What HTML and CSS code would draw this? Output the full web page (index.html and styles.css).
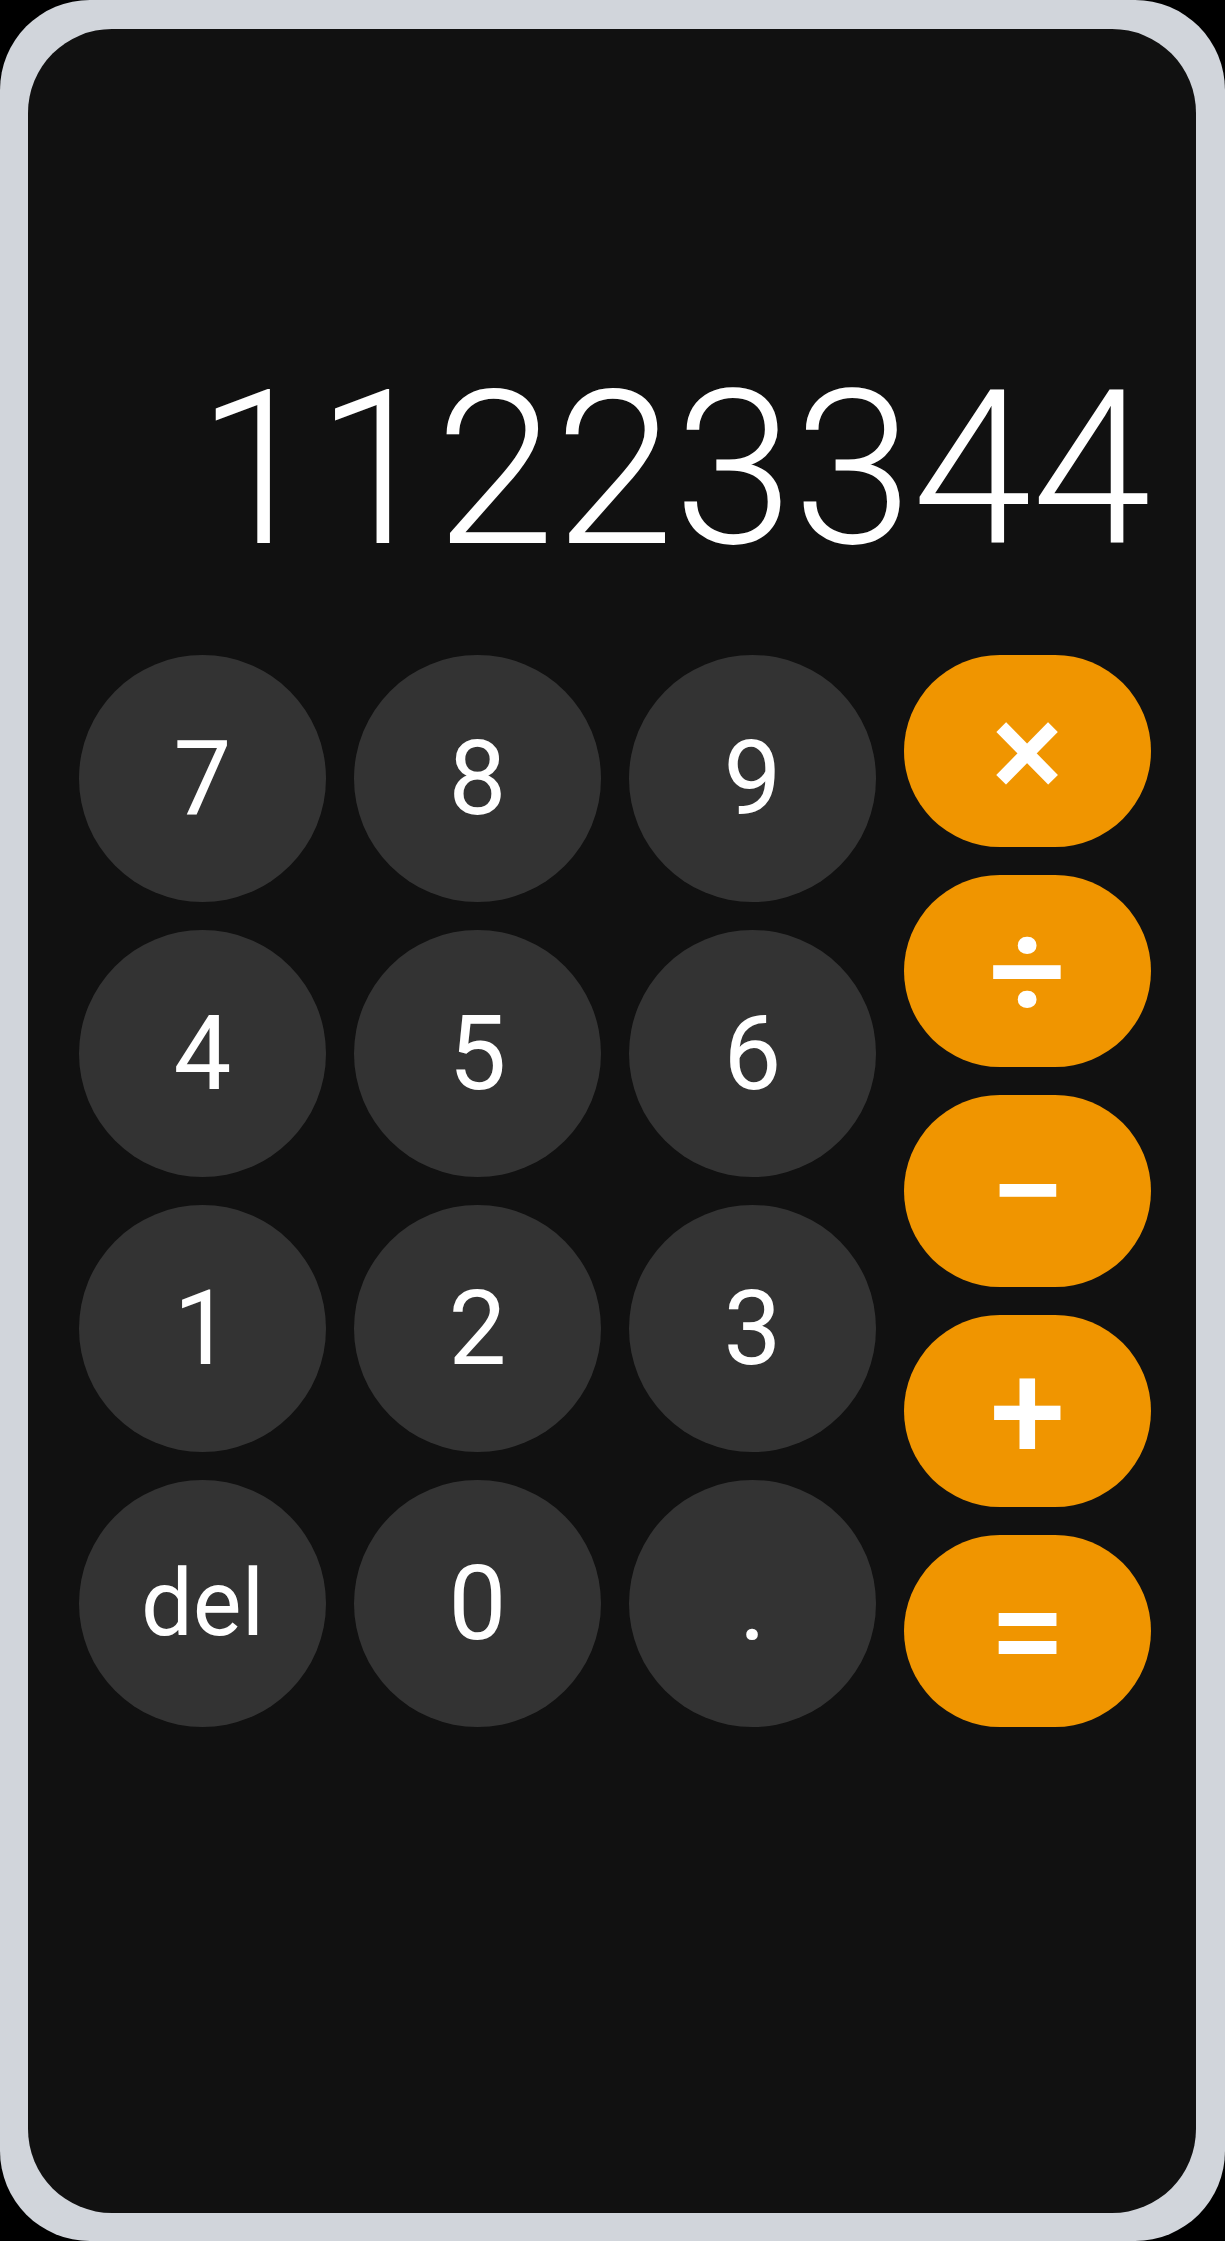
FILE: index.html
```html
<!DOCTYPE html>
<html lang="en">
<head>
<meta charset="utf-8">
<title>Calculator</title>
<link rel="stylesheet" href="styles.css">
</head>
<body>
<div class="frame">
  <div class="calc">
    <div class="display">11223344</div>
    <div class="keypad">
      <div class="digits">
        <button class="key">7</button>
        <button class="key">8</button>
        <button class="key">9</button>
        <button class="key">4</button>
        <button class="key">5</button>
        <button class="key">6</button>
        <button class="key">1</button>
        <button class="key">2</button>
        <button class="key">3</button>
        <button class="key key-del">del</button>
        <button class="key">0</button>
        <button class="key">.</button>
      </div>
      <div class="ops">
        <button class="op">×</button>
        <button class="op">÷</button>
        <button class="op">−</button>
        <button class="op">+</button>
        <button class="op">=</button>
      </div>
    </div>
  </div>
</div>
</body>
</html>
```
FILE: styles.css
```css
html, body {
  margin: 0;
  padding: 0;
  background: #000;
}

body {
  width: 1225px;
  height: 2241px;
  font-family: Roboto, "Noto Sans", sans-serif;
}

.frame {
  width: 1225px;
  height: 2241px;
  box-sizing: border-box;
  background: #d1d5db;
  border-radius: 90px;
  padding: 29px 29px 28px 28px;
}

.calc {
  height: 100%;
  box-sizing: border-box;
  background: #111111;
  border-radius: 84px;
  padding: 333px 45px 0 51px;
}

.display {
  font-family: Roboto, sans-serif;
  font-weight: 300;
  font-size: 215px;
  line-height: 215px;
  height: 215px;
  color: #ffffff;
  text-align: right;
  white-space: nowrap;
  margin-bottom: 78px;
}

.keypad {
  display: flex;
  gap: 28px;
}

.digits {
  display: grid;
  grid-template-columns: repeat(3, 247px);
  grid-auto-rows: 247px;
  gap: 28px;
}

.ops {
  display: flex;
  flex-direction: column;
  gap: 28px;
  width: 247px;
}

.key,
.op {
  border: none;
  margin: 0;
  padding: 0;
  color: #ffffff;
  display: flex;
  align-items: center;
  justify-content: center;
  font-family: Roboto, sans-serif;
  line-height: normal;
}

.key {
  background: #333333;
  border-radius: 50%;
  font-size: 103px;
  font-weight: 400;
}

.key-del {
  font-size: 92px;
}

.op {
  flex: 1;
  background: #f09500;
  border-radius: 9999px;
  font-size: 136px;
  font-weight: 500;
}
```
